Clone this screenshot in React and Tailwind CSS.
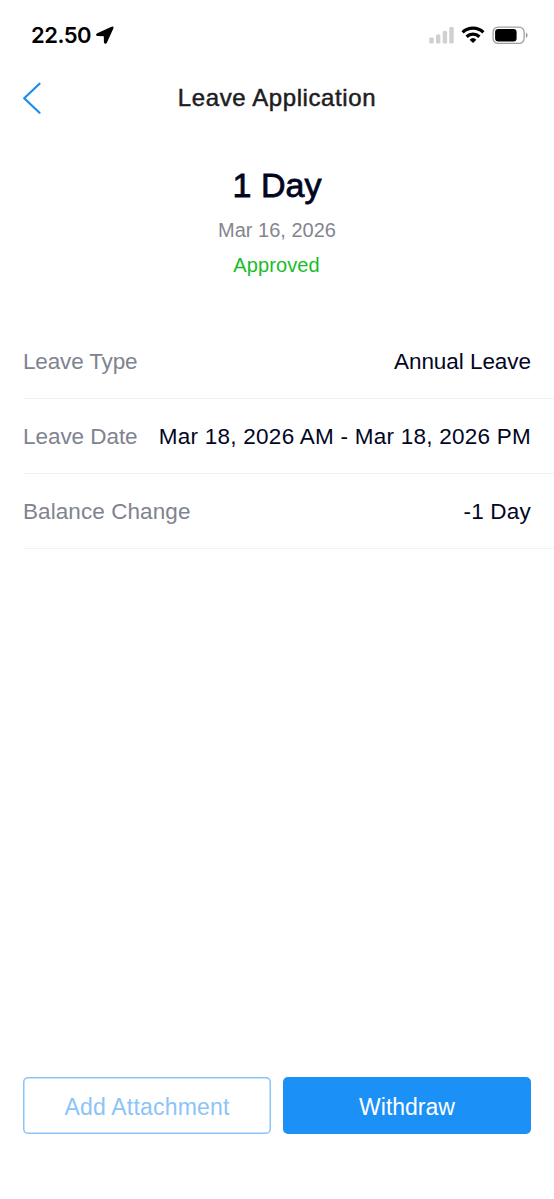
const rows = [
  { label: 'Leave Type', value: 'Annual Leave', labelClass: 'tracking-[-0.15px]', valueClass: 'tracking-[-0.05px]' },
  { label: 'Leave Date', value: 'Mar 18, 2026 AM - Mar 18, 2026 PM', labelClass: 'tracking-[-0.05px]', valueClass: 'tracking-[0.25px]' },
  { label: 'Balance Change', value: '-1 Day', labelClass: 'tracking-[0.08px]', valueClass: 'tracking-[0.2px]' },
];

function StatusBar() {
  return (
    <div className="flex h-[70px] items-center justify-between pl-[31px] pr-[26px] text-black">
      <div className="flex items-center gap-[5px]">
        <span className="font-['Inter',sans-serif] text-[22px] font-semibold leading-none tracking-[-0.5px]">22.50</span>
        <svg className="h-[18px] w-[18px]" viewBox="0 0 18 18" aria-hidden="true">
          <path d="M15.800 1.300 1.500 7.900C.3 8.500.6 9.500 1.700 9.500l6.300.1c.3 0 .4.1.4.4l.1 6.100c0 1.200 1.300 1.400 1.800.3L16.800 2.200c.4-.8-.2-1.300-1-.9Z" fill="currentColor" stroke="currentColor" strokeWidth="1.200" strokeLinejoin="round" />
        </svg>
      </div>
      <svg className="h-[20px] w-[99px]" viewBox="429 25 99 20" aria-hidden="true">
        <g fill="#d0d0d0">
          <rect x="429.300" y="37.400" width="4.400" height="6" rx="1.200" />
          <rect x="436" y="34.500" width="4.400" height="8.900" rx="1.200" />
          <rect x="442.700" y="31" width="4.400" height="12.400" rx="1.200" />
          <rect x="449.300" y="27" width="4.400" height="16.400" rx="1.200" />
        </g>
        <g fill="none" stroke="#000" strokeWidth="3.300">
          <path d="M462.600 32.400a15 15 0 0 1 20.800 0" />
          <path d="M466.600 36.700a9.300 9.300 0 0 1 12.800 0" />
        </g>
        <path d="M469.600 39.700a5 5 0 0 1 6.800 0L473 43.100Z" fill="#000" />
        <rect x="493.100" y="27.100" width="31" height="16.300" rx="5" fill="none" stroke="#a0a0a0" strokeWidth="1.300" />
        <rect x="495.100" y="29.100" width="21.500" height="12.300" rx="3.200" fill="#000" />
        <path d="M525.900 32.700c2.200.8 2.200 4.300 0 5.100Z" fill="#969696" />
      </svg>
    </div>
  );
}

export default function App() {
  return (
    <main className="flex h-[1199px] w-[554px] flex-col overflow-hidden bg-white font-['Liberation_Sans',Arial,sans-serif] text-[#02061f]">
      <StatusBar />
      <header className="grid h-[56px] grid-cols-[1fr_auto_1fr] items-center px-[22px]">
        <button type="button" aria-label="Back" className="w-[20px]">
          <svg className="h-[32px] w-[20px]" viewBox="0 0 20 32" fill="none" aria-hidden="true">
            <path d="M17.500 1.700 2.200 16.200 17.500 30.700" stroke="#1b8cec" strokeWidth="2.200" strokeLinecap="round" strokeLinejoin="round" />
          </svg>
        </button>
        <h1 className="text-[24px] leading-none tracking-[0.600px] text-[#1d1d1f] [-webkit-text-stroke:0.500px_currentColor]">Leave Application</h1>
      </header>

      <section className="flex h-[198px] flex-col items-center pt-[39px]">
        <h2 className="text-[34px] leading-[40px] [-webkit-text-stroke:0.800px_currentColor]">1 Day</h2>
        <p className="mt-[13px] text-[20px] leading-[24px] text-[#84858f]">Mar 16, 2026</p>
        <p className="mt-[11px] pr-px text-[20px] leading-[24px] tracking-[0.1px] text-[#18bd28]">Approved</p>
      </section>

      <dl className="pl-[23px]">
        {rows.map((row) => (
          <div key={row.label} className="flex h-[75px] items-center justify-between border-b border-[#f2f2f3] pt-[2px] pr-[23px] text-[22.500px] leading-none whitespace-nowrap">
            <dt className={`text-[#80838f] ${row.labelClass}`}>{row.label}</dt>
            <dd className={row.valueClass}>{row.value}</dd>
          </div>
        ))}
      </dl>

      <footer className="mt-auto mb-[65px] grid grid-cols-2 gap-[12px] px-[23px] text-[23px]">
        <button type="button" className="h-[57px] rounded-[5px] pt-[3px] tracking-[0.200px] text-[#8bc4f8] shadow-[inset_0_0_0_1.500px_#8bc4f8]">Add Attachment</button>
        <button type="button" className="h-[57px] rounded-[5px] bg-[#1b91f7] pt-[3px] text-white">Withdraw</button>
      </footer>
    </main>
  );
}
